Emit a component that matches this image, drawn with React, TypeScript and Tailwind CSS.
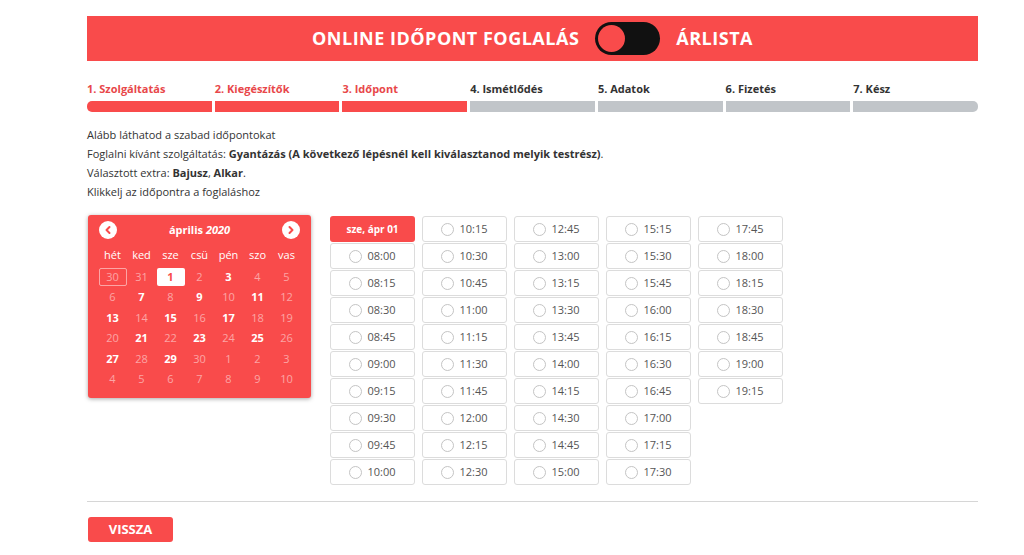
import { ChevronLeft, ChevronRight } from 'lucide-react';

const STEPS = [
  { label: '1. Szolgáltatás', done: true },
  { label: '2. Kiegészítők', done: true },
  { label: '3. Időpont', done: true },
  { label: '4. Ismétlődés', done: false },
  { label: '5. Adatok', done: false },
  { label: '6. Fizetés', done: false },
  { label: '7. Kész', done: false },
];

const WEEKDAYS = ['hét', 'ked', 'sze', 'csü', 'pén', 'szo', 'vas'];

// szabad napok áprilisban
const AVAILABLE = [1, 3, 7, 9, 11, 13, 15, 17, 21, 23, 25, 27, 29];

const buildDays = () => {
  const days: { day: number; key: string }[] = [];
  days.push({ day: 30, key: 'p30' });
  days.push({ day: 31, key: 'p31' });
  for (let d = 1; d <= 30; d++) days.push({ day: d, key: `c${d}` });
  for (let d = 1; d <= 10; d++) days.push({ day: d, key: `n${d}` });
  return days;
};

const SLOT_COLUMNS: string[][] = [
  ['08:00', '08:15', '08:30', '08:45', '09:00', '09:15', '09:30', '09:45', '10:00'],
  ['10:15', '10:30', '10:45', '11:00', '11:15', '11:30', '11:45', '12:00', '12:15', '12:30'],
  ['12:45', '13:00', '13:15', '13:30', '13:45', '14:00', '14:15', '14:30', '14:45', '15:00'],
  ['15:15', '15:30', '15:45', '16:00', '16:15', '16:30', '16:45', '17:00', '17:15', '17:30'],
  ['17:45', '18:00', '18:15', '18:30', '18:45', '19:00', '19:15'],
];

function Slot({ time }: { time: string }) {
  return (
    <div className="h-[26px] w-[85px] border border-[#dcdcdc] rounded-[3px] bg-white flex items-center justify-center gap-[5px] text-[11px] text-[#555]">
      <span className="w-[13px] h-[13px] rounded-full border border-[#c4c4c4] bg-white" />
      <span>{time}</span>
    </div>
  );
}

function Calendar() {
  const days = buildDays();
  return (
    <div className="w-[223px] h-[183px] bg-[#f94b4b] rounded-[3px] shadow-[0_1px_4px_rgba(0,0,0,0.35)] px-[10px] pt-[6px] text-white">
      <div className="flex items-center justify-between px-[1px] h-[18px]">
        <span className="w-[18px] h-[18px] rounded-full bg-white flex items-center justify-center">
          <ChevronLeft size={12} strokeWidth={4} className="text-[#f94b4b] -ml-[1px]" />
        </span>
        <span className="text-[11px] font-bold">
          április <i>2020</i>
        </span>
        <span className="w-[18px] h-[18px] rounded-full bg-white flex items-center justify-center">
          <ChevronRight size={12} strokeWidth={4} className="text-[#f94b4b] ml-[1px]" />
        </span>
      </div>
      <div className="grid grid-cols-7 mt-[4px] h-[24px] items-center text-[11px]">
        {WEEKDAYS.map((w) => (
          <span key={w} className="text-center">{w}</span>
        ))}
      </div>
      <div className="grid grid-cols-7 text-[11px]">
        {days.map(({ day, key }) => {
          const current = key.startsWith('c');
          const available = current && AVAILABLE.includes(day);
          const selected = key === 'c1';
          const outlined = key === 'p30';
          return (
            <div key={key} className="h-[20.4px] flex items-center justify-center">
              <span
                className={`
                  w-[28px]
                  h-[18px]
                  flex
                  items-center
                  justify-center
                  rounded-[2px]
                  ${selected ? 'bg-white text-[#f94b4b] font-bold' : ''}
                  ${outlined ? 'border border-white/50 text-white/50' : ''}
                  ${!selected && !outlined && available ? 'font-bold text-white' : ''}
                  ${!selected && !outlined && !available ? 'text-white/50' : ''}
                `}
              >
                {day}
              </span>
            </div>
          );
        })}
      </div>
    </div>
  );
}

export default function App() {
  return (
    <div
      className="w-[1024px] h-[555px] bg-white overflow-hidden"
      style={{ fontFamily: '"Open Sans", "Liberation Sans", sans-serif' }}
    >
      <div className="ml-[87px] w-[891px] pt-[16px]">
        <div className="h-[45px] bg-[#f94b4b] flex items-center justify-center gap-[16px] text-white">
          <span className="text-[18px] font-bold tracking-[0.5px]">ONLINE IDŐPONT FOGLALÁS</span>
          <span className="w-[65px] h-[33px] rounded-full bg-[#111] flex items-center px-[3px]">
            <span className="w-[27px] h-[27px] rounded-full bg-[#f94b4b]" />
          </span>
          <span className="text-[18px] font-bold tracking-[0.5px]">ÁRLISTA</span>
        </div>

        <div className="flex gap-[3px] mt-[20px]">
          {STEPS.map((step, i) => (
            <div key={step.label} className="flex-1 flex flex-col">
              <span
                className={`text-[11px] font-bold h-[16px] leading-[16px] ${step.done ? 'text-[#e8474a]' : 'text-[#333]'}`}
              >
                {step.label}
              </span>
              <div
                className={`
                  h-[11px]
                  mt-[4px]
                  ${step.done ? 'bg-[#f94b4b]' : 'bg-[#c1c5c9]'}
                  ${i === 0 ? 'rounded-l-[5px]' : ''}
                  ${i === STEPS.length - 1 ? 'rounded-r-[5px]' : ''}
                `}
              />
            </div>
          ))}
        </div>

        <div className="mt-[13px] text-[11px] leading-[19px] text-[#333]">
          <p>Alább láthatod a szabad időpontokat</p>
          <p>
            Foglalni kívánt szolgáltatás: <b>Gyantázás (A következő lépésnél kell kiválasztanod melyik testrész)</b>.
          </p>
          <p>
            Választott extra: <b>Bajusz</b>, <b>Alkar</b>.
          </p>
          <p>Klikkelj az időpontra a foglaláshoz</p>
        </div>

        <div className="flex mt-[14px]">
          <div className="ml-[1px]">
            <Calendar />
          </div>
          <div className="ml-[19px] flex gap-[7px] pt-[1px]">
            {SLOT_COLUMNS.map((col, ci) => (
              <div key={ci} className="flex flex-col gap-[1px]">
                {ci === 0 && (
                  <div className="h-[26px] w-[85px] rounded-[3px] bg-[#f94b4b] flex items-center justify-center text-white text-[10px] font-bold">
                    sze, ápr 01
                  </div>
                )}
                {col.map((t) => (
                  <Slot key={t} time={t} />
                ))}
              </div>
            ))}
          </div>
        </div>

        <div className="mt-[16px] border-t border-[#d6d6d6]" />

        <button
          type="button"
          className="mt-[15px] ml-[1px] w-[85px] h-[25px] rounded-[3px] bg-[#f94b4b] text-white text-[13px] font-bold flex items-center justify-center"
        >
          VISSZA
        </button>
      </div>
    </div>
  );
}
